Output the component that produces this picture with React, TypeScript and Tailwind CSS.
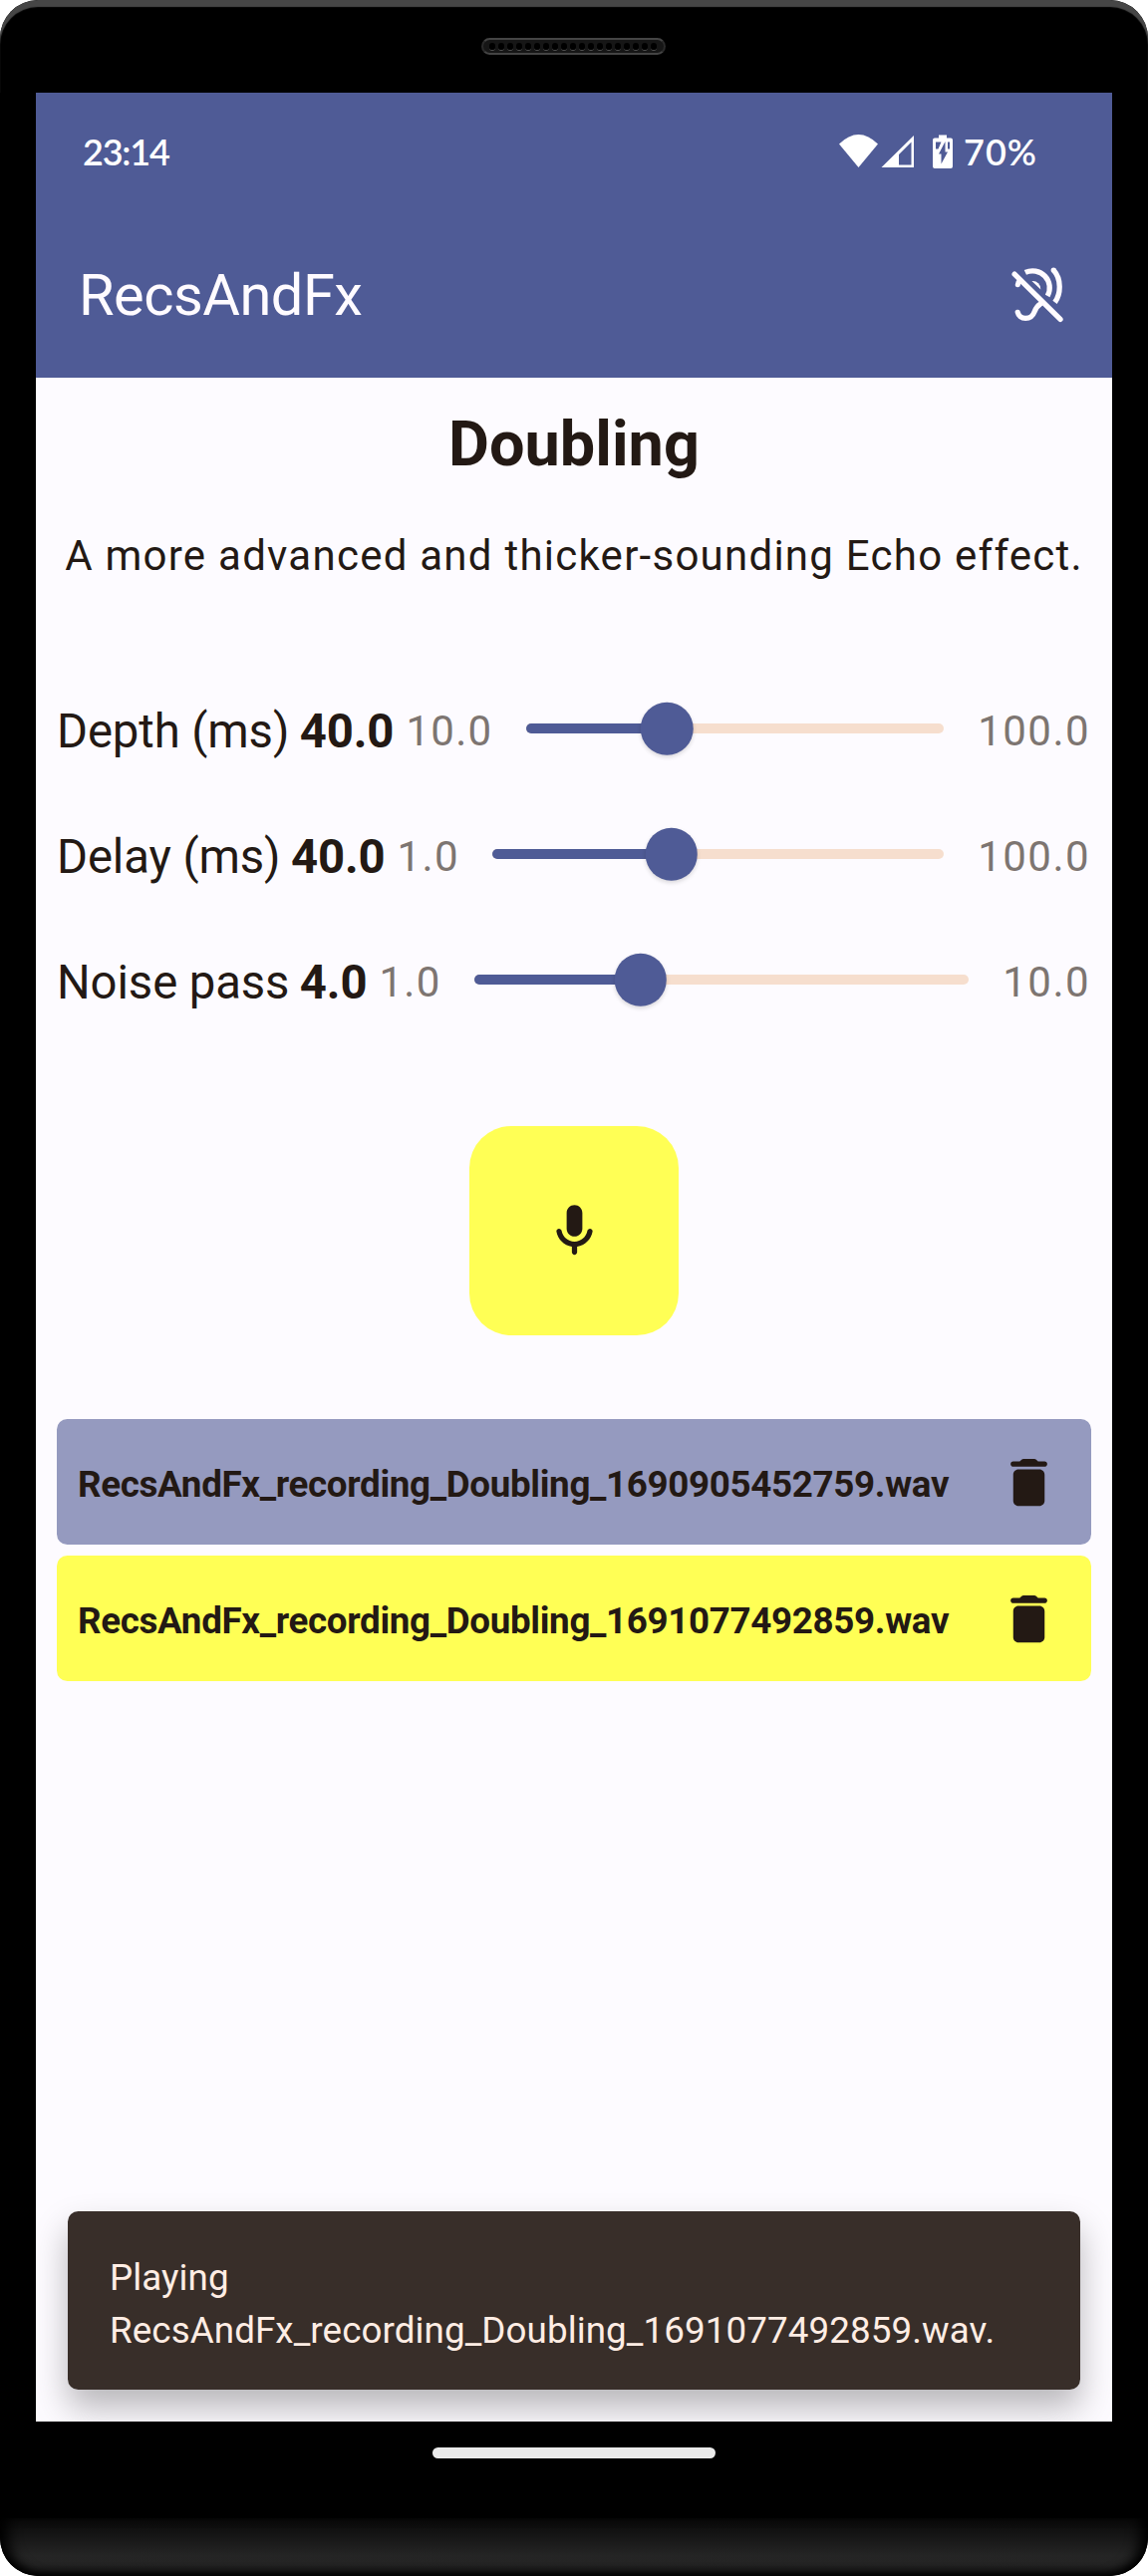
import React from 'react';

function HearingDisabledIcon() {
  return (
    <svg className="size-[63px]" viewBox="0 0 24 24" fill="none" stroke="#fffbff" strokeWidth="2" strokeLinecap="round">
      <path d="M2.700 4.250 20.200 21.500" />
      <path d="M4.900 6.600Q4 7.300 3.950 8.200" />
      <path d="M6.800 3.600A6.500 6.500 0 0 1 15.300 12.600" strokeLinecap="butt" />
      <path d="M12.600 15.600C11.200 16.400 10.800 17.300 10.300 18.600C9.600 20.500 8.700 21.100 6.900 21.100C5.300 21.100 4.200 20.100 3.900 18.800" />
      <path d="M17.600 2.700C19.200 4.500 19.900 6.800 19.900 9C19.900 11.200 19.400 13.200 18.100 15" strokeLinecap="butt" />
      <circle cx="17.600" cy="2.700" r="1" fill="#fffbff" stroke="none" />
      <path d="M9.300 6.900A3 3 0 0 1 12.700 10.100Z" fill="#fffbff" stroke="none" />
    </svg>
  );
}

function MicIcon() {
  return (
    <svg className="size-[63px]" viewBox="0 0 24 24" fill="#231914">
      <path d="M12 14c1.66 0 3-1.34 3-3V5c0-1.66-1.34-3-3-3S9 3.34 9 5v6c0 1.66 1.34 3 3 3zm5.91-3c-.49 0-.9.36-.98.85C16.52 14.2 14.47 16 12 16s-4.52-1.8-4.93-4.15c-.08-.49-.49-.85-.98-.85-.61 0-1.09.54-1 1.14.49 3 2.89 5.35 5.91 5.78V20c0 .55.45 1 1 1s1-.45 1-1v-2.08c3.02-.43 5.42-2.78 5.91-5.78.1-.6-.39-1.14-1-1.14z" />
    </svg>
  );
}

function TrashIcon() {
  return (
    <svg className="size-[63px]" viewBox="0 0 24 24" fill="#231914">
      <path d="M6 19c0 1.1.9 2 2 2h8c1.1 0 2-.9 2-2V9c0-1.1-.9-2-2-2H8c-1.1 0-2 .9-2 2v10zM18 4h-2.500l-.71-.71c-.18-.18-.44-.29-.7-.29H9.910c-.26 0-.52.11-.7.29L8.500 4H6c-.55 0-1 .45-1 1s.45 1 1 1h12c.55 0 1-.45 1-1s-.45-1-1-1z" />
    </svg>
  );
}

type Param = { label: string; value: string; min: string; max: string; fraction: number };

const params: Param[] = [
  { label: 'Depth (ms)', value: '40.0', min: '10.0', max: '100.0', fraction: 30 / 90 },
  { label: 'Delay (ms)', value: '40.0', min: '1.0', max: '100.0', fraction: 39 / 99 },
  { label: 'Noise pass', value: '4.0', min: '1.0', max: '10.0', fraction: 3 / 9 },
];

function SliderRow({ label, value, min, max, fraction }: Param) {
  return (
    <div className="flex h-[126px] items-center whitespace-nowrap">
      <span className="pt-[5px] text-[47.25px] leading-[60px] tracking-[-0.1px]">{label}</span>
      <span className="ml-[10.5px] pt-[5px] text-[47.25px] leading-[60px] font-bold tracking-[-0.1px]">{value}</span>
      <span className="ml-[12px] pt-[5px] text-[42px] leading-[60px] tracking-[1.31px] text-[#7d7571]">{min}</span>
      <div className="relative mr-[34px] ml-[33px] h-[10.5px] flex-1 rounded-full bg-[#f6dece]">
        <div className="absolute inset-x-[5.25px] inset-y-0">
          <div className="absolute inset-y-0 -left-[5.25px] rounded-l-full bg-[#4f5b96]" style={{ width: `calc(${fraction * 100}% + 5.25px)` }} />
          <div
            className="absolute top-1/2 size-[52.5px] -translate-x-1/2 -translate-y-1/2 rounded-full bg-[#4f5b96] shadow-[0_2px_4px_rgba(0,0,0,0.15)]"
            style={{ left: `${fraction * 100}%` }}
          />
        </div>
      </div>
      <span className="pt-[5px] pr-[1px] text-[42px] leading-[60px] tracking-[1.45px] text-[#7d7571]">{max}</span>
    </div>
  );
}

function StatusIcons() {
  return (
    <svg className="h-[36px] w-[116px]" viewBox="0 0 116 36" fill="#fff">
      <path d="M0 10.500Q19.500-8.500 39 10.500L19.500 34Z" />
      <path d="M75 2V34H42.500ZM72.500 8.500 60 21V31.500H72.500Z" fillRule="evenodd" />
      <path fillRule="evenodd" d="M100 1.500h8v3h4a2 2 0 0 1 2 2V33a2 2 0 0 1-2 2H96a2 2 0 0 1-2-2V6.500a2 2 0 0 1 2-2h4ZM97 8.500V15.500H99.500L102.500 8.500ZM109 8.500V15.500H111V8.500ZM106.500 8 100 20.500H102.500V30.500L109 18.500H106.500Z" />
    </svg>
  );
}

const files = [
  { name: 'RecsAndFx_recording_Doubling_1690905452759.wav', color: 'bg-[#959abf]' },
  { name: 'RecsAndFx_recording_Doubling_1691077492859.wav', color: 'bg-[#ffff55]' },
];

export default function App() {
  return (
    <div className="h-[2585px] w-[1152px] bg-white font-['Roboto',sans-serif] text-[#231914]">
      <div className="flex h-full flex-col overflow-hidden rounded-[38px] bg-black">
        <div className="flex h-[93px] shrink-0 flex-col items-center rounded-t-[38px] shadow-[inset_0_7px_1px_#464646]">
          <div className="mt-[38px] mr-[2px] flex h-[17px] w-[185px] items-center justify-between rounded-full border-2 border-x-[#2a2a2a] border-t-[#444] border-b-[#444] bg-[#161616] px-[6px]">
            {Array.from({ length: 19 }, (_, i) => (
              <span key={i} className="h-[8px] w-[6.500px] rounded-full border-b border-[#555] bg-black" />
            ))}
          </div>
        </div>

        <div className="mx-[36px] flex h-[2337px] shrink-0 flex-col overflow-hidden bg-[#fdfbff]">
          <header className="h-[286px] shrink-0 bg-[#4f5b96] text-[#fffbff]">
            <div className="flex h-[118px] items-center justify-between pr-[74px] pl-[47px] font-['Lato',sans-serif] text-[36px] font-semibold text-white">
              <span className="tracking-[-1.2px]">23:14</span>
              <div className="flex items-center gap-[9px]">
                <StatusIcons />
                <span className="w-[75px] tracking-[1px]">70%</span>
              </div>
            </div>
            <div className="flex h-[168px] items-center justify-between pr-[42px] pl-[43px]">
              <h1 className="pt-[3px] text-[57.75px] tracking-[-0.5px]">RecsAndFx</h1>
              <HearingDisabledIcon />
            </div>
          </header>

          <main className="flex grow flex-col px-[21px]">
            <h2 className="mt-[25px] text-center text-[63px] leading-[84px] font-bold">Doubling</h2>
            <p className="mt-[38px] text-center text-[42px] leading-[63px] tracking-[1.25px] whitespace-nowrap">
              A more advanced and thicker-sounding Echo effect.
            </p>
            <section className="mt-[79px]">
              {params.map((p) => (
                <SliderRow key={p.label} {...p} />
              ))}
            </section>
            <button className="mt-[84px] flex size-[210px] items-center justify-center self-center rounded-[42px] bg-[#ffff55]">
              <MicIcon />
            </button>
            <ul className="mt-[84px] flex flex-col gap-[11px]">
              {files.map((f) => (
                <li key={f.name} className={`flex h-[126px] items-center justify-between rounded-[10.5px] pr-[31px] pl-[21px] ${f.color}`}>
                  <span className="pt-[5px] text-[36.75px] font-bold tracking-[-0.33px] whitespace-nowrap">{f.name}</span>
                  <TrashIcon />
                </li>
              ))}
            </ul>
            <div className="mx-[11px] mt-auto mb-[32px] flex h-[179px] flex-col justify-center rounded-[10.5px] bg-[#382e29] px-[42px] pt-[8px] text-[36.75px] leading-[52.5px] tracking-[0.09px] text-[#ffede4] shadow-[0_18px_34px_rgba(0,0,0,0.28)]">
              <p>Playing</p>
              <p className="whitespace-nowrap">RecsAndFx_recording_Doubling_1691077492859.wav.</p>
            </div>
          </main>
        </div>

        <div className="flex h-[97px] shrink-0 justify-center">
          <div className="mt-[26px] h-[11px] w-[284px] rounded-full bg-[#ebebeb]" />
        </div>
        <div className="h-[58px] shrink-0 rounded-b-[38px] bg-linear-to-b from-[#090909] via-[#252525] via-65% to-[#222] shadow-[inset_14px_0_14px_-6px_#000,inset_-14px_0_14px_-6px_#000,inset_0_-8px_8px_-4px_#000]" />
      </div>
    </div>
  );
}
